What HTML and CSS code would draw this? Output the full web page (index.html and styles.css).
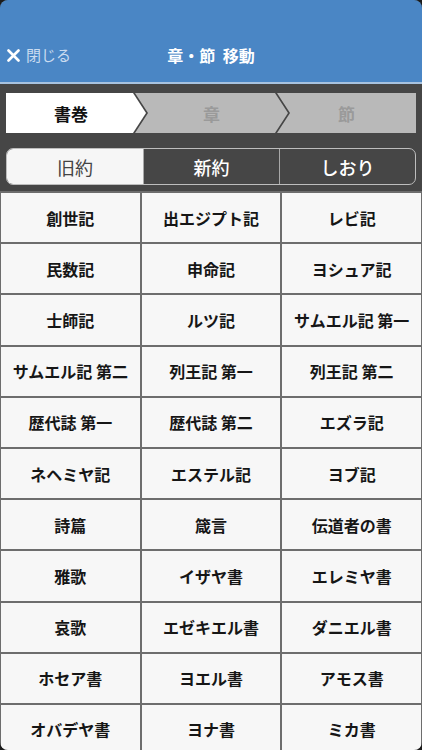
FILE: index.html
```html
<!DOCTYPE html>
<html lang="ja">
<head>
  <meta charset="UTF-8" />
  <title>章・節 移動</title>
  <link rel="stylesheet" href="styles.css">
</head>
<body>
  <div class="app">
    <div class="header">
      <div class="close">
        <svg class="close-icon" width="13" height="13" viewBox="0 0 13 13">
          <path d="M1.5 1.5 L11.5 11.5 M11.5 1.5 L1.5 11.5" stroke="#ffffff" stroke-width="2.6" stroke-linecap="round" />
        </svg>
        <span>閉じる</span>
      </div>
      <div class="title">章・節 移動</div>
    </div>

    <div class="crumbs">
      <div class="crumb first active">書巻</div>
      <div class="crumb middle">章</div>
      <div class="crumb last">節</div>
    </div>

    <div class="tabs">
      <div class="tab selected">旧約</div>
      <div class="tab">新約</div>
      <div class="tab">しおり</div>
    </div>

    <div class="books">
      <div class="book">創世記</div>
      <div class="book">出エジプト記</div>
      <div class="book">レビ記</div>
      <div class="book">民数記</div>
      <div class="book">申命記</div>
      <div class="book">ヨシュア記</div>
      <div class="book">士師記</div>
      <div class="book">ルツ記</div>
      <div class="book">サムエル記 第一</div>
      <div class="book">サムエル記 第二</div>
      <div class="book">列王記 第一</div>
      <div class="book">列王記 第二</div>
      <div class="book">歴代誌 第一</div>
      <div class="book">歴代誌 第二</div>
      <div class="book">エズラ記</div>
      <div class="book">ネヘミヤ記</div>
      <div class="book">エステル記</div>
      <div class="book">ヨブ記</div>
      <div class="book">詩篇</div>
      <div class="book">箴言</div>
      <div class="book">伝道者の書</div>
      <div class="book">雅歌</div>
      <div class="book">イザヤ書</div>
      <div class="book">エレミヤ書</div>
      <div class="book">哀歌</div>
      <div class="book">エゼキエル書</div>
      <div class="book">ダニエル書</div>
      <div class="book">ホセア書</div>
      <div class="book">ヨエル書</div>
      <div class="book">アモス書</div>
      <div class="book">オバデヤ書</div>
      <div class="book">ヨナ書</div>
      <div class="book">ミカ書</div>
    </div>
  </div>
</body>
</html>
```

FILE: styles.css
```css
body {
  margin: 0;
  background-color: #1c1c1c;
  font-family: "Noto Sans CJK JP", "Noto Sans", sans-serif;
}

.app {
  width: 422px;
  height: 750px;
  background-color: #464646;
  border-radius: 8px;
  overflow: hidden;
}

.header {
  height: 84px;
  background-color: #4a86c5;
  border-bottom: 2px solid #a8c3e0;
  display: flex;
  align-items: flex-end;
  padding-bottom: 16px;
  box-sizing: border-box;
  position: relative;
}

.close {
  display: flex;
  align-items: center;
  gap: 6px;
  padding-left: 7px;
  color: #cadcf0;
  font-size: 15px;
  line-height: 22px;
}

.title {
  position: absolute;
  left: 0;
  right: 0;
  bottom: 16px;
  text-align: center;
  color: white;
  font-weight: bold;
  font-size: 16px;
  line-height: 22px;
  word-spacing: 4px;
  pointer-events: none;
}

.crumbs {
  display: flex;
  margin: 9px 6px 0;
  height: 40px;
}

.crumb {
  display: flex;
  align-items: center;
  justify-content: center;
  background-color: #b9b9b9;
  color: #9a9a9a;
  font-size: 17px;
  font-weight: bold;
}

.crumb.active {
  background-color: white;
  color: #111;
}

.crumb.first {
  width: 140px;
  padding-right: 10px;
  box-sizing: border-box;
  clip-path: polygon(0 0, calc(100% - 13px) 0, 100% 50%, calc(100% - 13px) 100%, 0 100%);
}

.crumb.middle {
  width: 153px;
  margin-left: -11px;
  clip-path: polygon(0 0, calc(100% - 13px) 0, 100% 50%, calc(100% - 13px) 100%, 0 100%, 13px 50%);
}

.crumb.last {
  flex: 1;
  margin-left: -11px;
  clip-path: polygon(0 0, 100% 0, 100% 100%, 0 100%, 13px 50%);
}

.tabs {
  display: grid;
  grid-template-columns: repeat(3, 1fr);
  margin: 15px 6px 0;
  height: 37px;
  border: 1px solid #bdbdbd;
  border-radius: 7px;
  overflow: hidden;
  box-sizing: border-box;
}

.tab {
  display: flex;
  align-items: center;
  justify-content: center;
  color: white;
  font-size: 18px;
  font-weight: 500;
  border-left: 1px solid #a8a8a8;
}

.tab:first-child {
  border-left: none;
}

.tab.selected {
  background-color: #f6f6f6;
  color: #444;
  font-weight: normal;
}

.books {
  display: grid;
  grid-template-columns: repeat(3, 1fr);
  grid-auto-rows: 49.2px;
  gap: 2px;
  margin-top: 6px;
  padding: 2px 1px;
  background-color: #6d6d6d;
}

.book {
  display: flex;
  align-items: center;
  justify-content: center;
  background-color: #f7f7f7;
  color: #161616;
  font-size: 16px;
  font-weight: bold;
  white-space: nowrap;
}
```
